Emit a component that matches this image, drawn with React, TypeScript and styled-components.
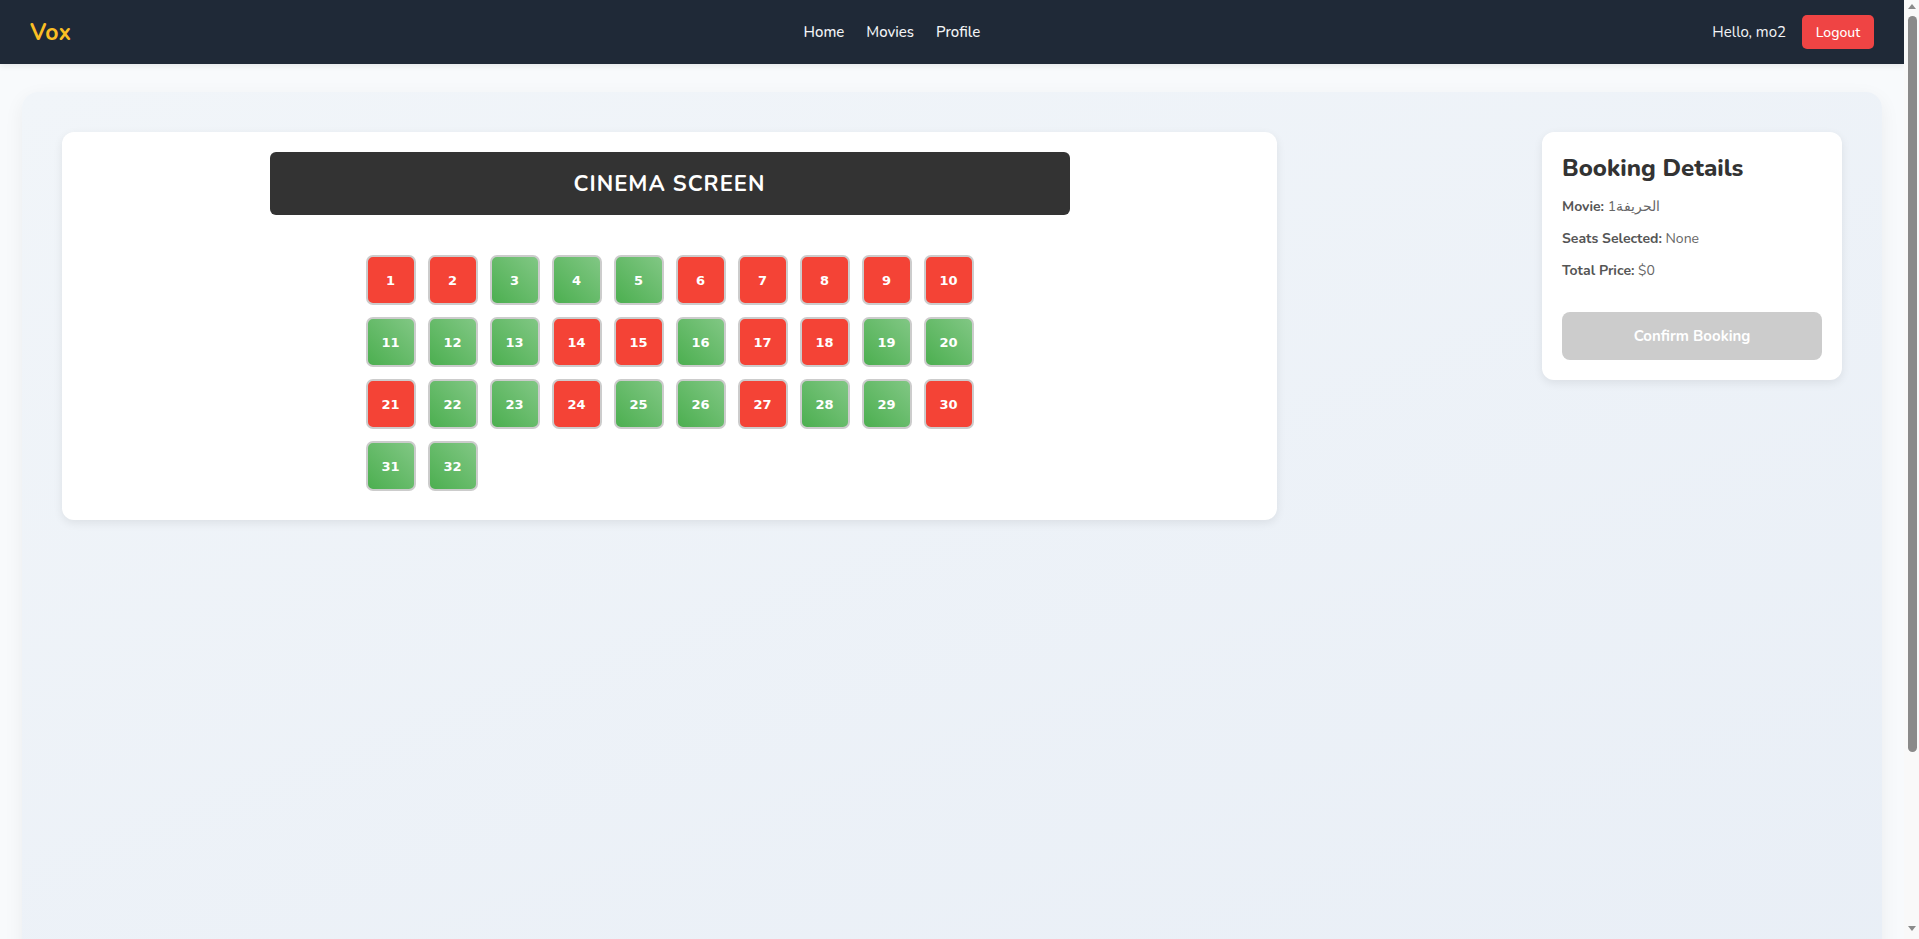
import styled, { createGlobalStyle } from "styled-components";

const GlobalStyle = createGlobalStyle`
  html, body {
    margin: 0;
    height: 100%;
    overflow: hidden;
  }
  body {
    background: #f8fafc;
    font-family: "Nunito", "Lato", "Noto Sans", sans-serif;
    color: #333;
  }
`;

const MOVIE_TITLE = "الحريفة1";
const BOOKED = [1, 2, 6, 7, 8, 9, 10, 14, 15, 17, 18, 21, 24, 27, 30];
const TOTAL_SEATS = 32;

const Shell = styled.div`
  display: flex;
  height: 100vh;
`;

const Page = styled.div`
  flex: 1;
  min-width: 0;
  overflow: hidden;
`;

// classic window scrollbar as seen in the screenshot
const ScrollTrack = styled.div`
  width: 15px;
  flex-shrink: 0;
  display: flex;
  flex-direction: column;
  align-items: center;
  padding: 4px 0 8px;
  box-sizing: border-box;
  background: #f9f9f9;
`;

const ScrollArrow = styled.div<{ $down?: boolean }>`
  width: 0;
  height: 0;
  border-left: 4px solid transparent;
  border-right: 4px solid transparent;
  ${(p) => (p.$down ? "border-top: 5px solid #8a8a8a;" : "border-bottom: 5px solid #8a8a8a;")}
`;

const ScrollThumb = styled.div`
  width: 9px;
  height: 736px;
  margin: 7px 0 0 1px;
  border-radius: 5px;
  background: #8a8a8a;
`;

const ScrollSpacer = styled.div`
  flex: 1;
`;

const Navbar = styled.nav`
  display: flex;
  align-items: center;
  justify-content: space-between;
  height: 64px;
  padding: 0 30px;
  background: #1f2937;
  box-shadow: 0 2px 6px rgba(0, 0, 0, 0.08);
`;

const Logo = styled.div`
  color: #fbbf24;
  font-size: 23px;
  font-weight: 700;
  letter-spacing: 0.3px;
`;

const NavLinks = styled.div`
  display: flex;
  gap: 22px;
`;

const NavLink = styled.a`
  color: #f3f4f6;
  font-size: 15px;
  font-weight: 500;
  text-decoration: none;
`;

const UserArea = styled.div`
  display: flex;
  align-items: center;
  gap: 16px;
  color: #f3f4f6;
  font-size: 15px;
`;

const LogoutButton = styled.button`
  background: #ef4444;
  color: #fff;
  border: none;
  border-radius: 5px;
  height: 34px;
  width: 72px;
  font-family: inherit;
  font-size: 14px;
  font-weight: 500;
`;

const Main = styled.main`
  padding: 28px 22px 48px;
`;

const Container = styled.div`
  display: flex;
  justify-content: space-between;
  align-items: flex-start;
  min-height: 100vh;
  padding: 40px;
  border-radius: 16px;
  background: linear-gradient(160deg, #f1f5f9 0%, #e8eef6 100%);
  box-shadow: 0 6px 20px rgba(0, 0, 0, 0.06);
`;

const SeatCard = styled.section`
  flex: 0 1 1215px;
  box-sizing: border-box;
  display: flex;
  flex-direction: column;
  align-items: center;
  padding: 20px 20px 29px;
  border-radius: 12px;
  background: #fff;
  box-shadow: 0 3px 10px rgba(0, 0, 0, 0.08);
`;

const Screen = styled.div`
  width: 800px;
  height: 63px;
  display: flex;
  align-items: center;
  justify-content: center;
  background: #333;
  border-radius: 6px;
  color: #fff;
  font-size: 22px;
  font-weight: 700;
  letter-spacing: 1px;
`;

const SeatGrid = styled.div`
  display: grid;
  grid-template-columns: repeat(10, 50px);
  gap: 12px;
  margin-top: 40px;
`;

const Seat = styled.button<{ $booked: boolean }>`
  width: 50px;
  height: 50px;
  box-sizing: border-box;
  border: 2px solid #ccc;
  border-radius: 7px;
  background: ${(p) =>
    p.$booked ? "#f44336" : "linear-gradient(45deg, #4caf50 0%, #81c784 100%)"};
  color: #fff;
  font-family: "DejaVu Sans", "Noto Sans", sans-serif;
  font-size: 13px;
  font-weight: 700;
`;

const DetailsCard = styled.aside`
  width: 300px;
  box-sizing: border-box;
  padding: 20px;
  border-radius: 12px;
  background: #fff;
  box-shadow: 0 3px 10px rgba(0, 0, 0, 0.08);
`;

const Title = styled.h2`
  margin: 0 0 12px;
  font-size: 24px;
  font-weight: 800;
  color: #333;
`;

const DetailRow = styled.p`
  margin: 0 0 10px;
  font-size: 14px;
  line-height: 22px;
  color: #666;

  strong {
    color: #555;
    font-weight: 700;
  }
`;

const ConfirmButton = styled.button`
  width: 100%;
  height: 48px;
  margin-top: 20px;
  border: none;
  border-radius: 8px;
  background: #ccc;
  color: #fff;
  font-family: inherit;
  font-size: 15px;
  font-weight: 700;
`;

export default function App() {
  const seats = Array.from({ length: TOTAL_SEATS }, (_, i) => i + 1);

  return (
    <Shell>
      <GlobalStyle />
      <Page>
        <Navbar>
          <Logo>Vox</Logo>
          <NavLinks>
            <NavLink href="#">Home</NavLink>
            <NavLink href="#">Movies</NavLink>
            <NavLink href="#">Profile</NavLink>
          </NavLinks>
          <UserArea>
            <span>Hello, mo2</span>
            <LogoutButton>Logout</LogoutButton>
          </UserArea>
        </Navbar>
        <Main>
          <Container>
            <SeatCard>
              <Screen>CINEMA SCREEN</Screen>
              <SeatGrid>
                {seats.map((n) => (
                  <Seat key={n} $booked={BOOKED.includes(n)}>
                    {n}
                  </Seat>
                ))}
              </SeatGrid>
            </SeatCard>
            <DetailsCard>
              <Title>Booking Details</Title>
              <DetailRow>
                <strong>Movie:</strong> {MOVIE_TITLE}
              </DetailRow>
              <DetailRow>
                <strong>Seats Selected:</strong> None
              </DetailRow>
              <DetailRow>
                <strong>Total Price:</strong> $0
              </DetailRow>
              <ConfirmButton disabled>Confirm Booking</ConfirmButton>
            </DetailsCard>
          </Container>
        </Main>
      </Page>
      <ScrollTrack>
        <ScrollArrow />
        <ScrollThumb />
        <ScrollSpacer />
        <ScrollArrow $down />
      </ScrollTrack>
    </Shell>
  );
}
